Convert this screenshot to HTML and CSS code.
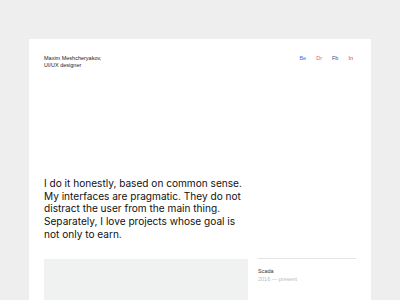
FILE: index.html
```html
<!DOCTYPE html>
<html lang="en">
<head>
    <meta charset="UTF-8">
    <meta name="viewport" content="width=device-width, initial-scale=1.0">
    <title>Maxim Meshcheryakov</title>
    <link rel="stylesheet" href="styles.css">
</head>
<body>

    <div class="page">
        <header class="header">
            <div class="intro">
                Maxim Meshcheryakov,<br>
                UI/UX designer
            </div>
            <nav class="socials">
                <a href="#" class="be">Be</a>
                <a href="#" class="dr">Dr</a>
                <a href="#" class="fb">Fb</a>
                <a href="#" class="in">In</a>
            </nav>
        </header>

        <p class="about">
            I do it honestly, based on common sense.<br>
            My interfaces are pragmatic. They do not<br>
            distract the user from the main thing.<br>
            Separately, I love projects whose goal is<br>
            not only to earn.
        </p>

        <section class="work">
            <div class="preview"></div>
            <div class="job">
                <div class="job-name">Scada</div>
                <div class="job-date">2016 — present</div>
            </div>
        </section>
    </div>

</body>
</html>
```

FILE: styles.css
```css
body {
    font-family: 'Liberation Sans', Arial, sans-serif;
    background-color: #eeeeee;
    margin: 0;
    padding: 39px 0 0 29px;
    color: #111;
}

.page {
    background-color: #fff;
    width: 342px;
    min-height: 261px;
    box-sizing: border-box;
    padding: 16px 18px 0 15px;
}

.header {
    display: flex;
    justify-content: space-between;
    align-items: flex-start;
}

.intro {
    font-size: 5.5px;
    line-height: 6.5px;
    color: #222;
}

.socials {
    display: flex;
    gap: 10px;
    font-size: 5.5px;
    line-height: 6.5px;
}

.socials a {
    text-decoration: none;
}

.be { color: #3d6fde; }
.dr { color: #e8508c; }
.fb { color: #3b4f8e; }
.in { color: #d6307a; }

.about {
    margin: 109px 0 0;
    font-family: 'Inter', 'Liberation Sans', sans-serif;
    font-size: 10.1px;
    line-height: 12.7px;
    white-space: nowrap;
    color: #111;
}

.work {
    display: grid;
    grid-template-columns: 204px 98px;
    gap: 10px;
    margin-top: 17px;
}

.preview {
    background-color: #f0f1f1;
    height: 42px;
    margin-top: 1px;
}

.job {
    border-top: 1px solid #e4e4e4;
    padding-top: 8px;
    font-size: 5.5px;
    line-height: 8px;
}

.job-name {
    color: #333;
}

.job-date {
    color: #bbb;
}
```
